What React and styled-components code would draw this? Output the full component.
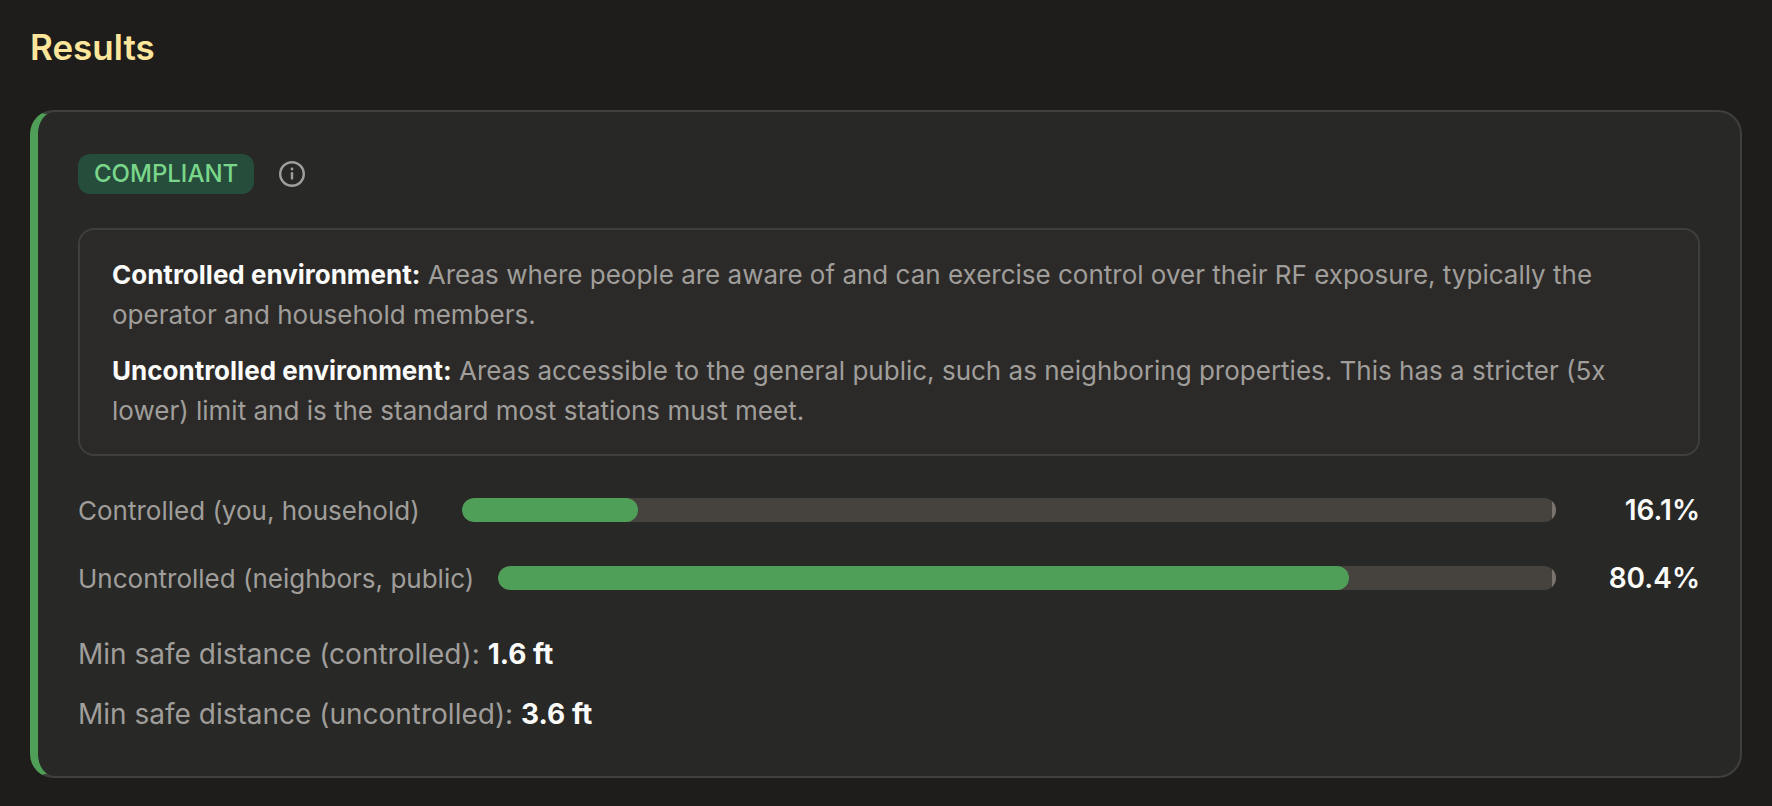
import React from "react";
import styled, { createGlobalStyle } from "styled-components";

const GlobalStyle = createGlobalStyle`
  * {
    box-sizing: border-box;
  }

  body {
    margin: 0;
    background: #1f1d1b;
    color: #a09e9b;
    font-family: Inter, "Liberation Sans", sans-serif;
    font-size: 28px;
    line-height: 44px;
    font-optical-sizing: none;
    -webkit-font-smoothing: antialiased;
  }
`

const Page = styled.main`
  padding: 24px 30px 28px;
`

const Title = styled.h2`
  margin: 0 0 40px;
  color: #fbe69b;
  font-size: 35px;
  font-weight: 600;
  line-height: 46px;
`

const Card = styled.section`
  padding: 40px;
  background: #282826;
  border: 2px solid #3f3f3d;
  border-left: 8px solid #4f9f58;
  border-radius: 24px;
`

const StatusRow = styled.div`
  display: flex;
  align-items: center;
  gap: 16px;
  height: 44px;
  margin-bottom: 32px;
`

const Badge = styled.span`
  padding: 0 16px;
  border-radius: 12px;
  background: #264d3c;
  color: #7ad68a;
  font-size: 24px;
  font-weight: 500;
  line-height: 40px;
`

const InfoButton = styled.button`
  display: flex;
  padding: 8px;
  border: 0;
  background: none;
  color: #a09e9b;
  cursor: pointer;
`

const InfoBox = styled.div`
  display: flex;
  flex-direction: column;
  gap: 16px;
  margin-bottom: 32px;
  padding: 25px 32px 23px;
  background: #2c2a28;
  border: 2px solid #3f3f3d;
  border-radius: 16px;
  font-size: 26px;
  line-height: 40px;
`

const InfoText = styled.p`
  margin: 0;
`

const Strong = styled.strong`
  color: #fafaf9;
  font-weight: 700;
`

const Rows = styled.div`
  display: flex;
  flex-direction: column;
  gap: ${props => props.$gap}px;
  margin-bottom: ${props => props.$bottom || 0}px;
`

const ExposureRow = styled.div`
  display: flex;
  align-items: center;
  gap: 24px;
`

const Label = styled.span`
  min-width: 360px;
  padding-top: 2px;
  font-size: 26px;
  line-height: 42px;
  white-space: nowrap;
`

const Track = styled.div`
  position: relative;
  flex: 1;
  height: 24px;
  overflow: hidden;
  border-radius: 12px;
  background: #46423d;
`

const Fill = styled.div`
  height: 100%;
  border-radius: 12px;
  background: #4f9f58;
`

/* marks the 100% limit on top of the track */
const LimitMark = styled.span`
  position: absolute;
  top: 0;
  right: 0;
  width: 4px;
  height: 100%;
  background: #78716c;
`

const Value = styled.span`
  width: 120px;
  color: #fafaf9;
  font-weight: 600;
  text-align: right;
`

const Distance = styled.p`
  margin: 0;
`

const exposures = [
  { id: "controlled", label: "Controlled (you, household)", percent: 16.1 },
  { id: "uncontrolled", label: "Uncontrolled (neighbors, public)", percent: 80.4 },
];

const distances = [
  { id: "controlled", label: "Min safe distance (controlled):", value: "1.6 ft" },
  { id: "uncontrolled", label: "Min safe distance (uncontrolled):", value: "3.6 ft" },
];

function InfoIcon() {
  return (
    <svg width="28" height="28" viewBox="0 0 28 28" fill="none" stroke="currentColor" strokeWidth="2.4" strokeLinecap="round" aria-hidden="true">
      <circle cx="14" cy="14" r="11.8" />
      <path d="M14 13.2v5.2" />
      <path d="M14 8.9v0.1" strokeWidth="2.8" />
    </svg>
  );
}

function Exposure({ label, percent }) {
  return (
    <ExposureRow>
      <Label>{label}</Label>
      <Track role="progressbar" aria-label={label} aria-valuenow={percent} aria-valuemin={0} aria-valuemax={100}>
        <Fill style={{ width: `${percent}%` }} />
        <LimitMark />
      </Track>
      <Value>{percent}%</Value>
    </ExposureRow>
  );
}

function App() {
  return (
    <Page>
      <GlobalStyle />
      <Title>Results</Title>
      <Card>
        <StatusRow>
          <Badge>COMPLIANT</Badge>
          <InfoButton type="button" aria-label="About environments">
            <InfoIcon />
          </InfoButton>
        </StatusRow>
        <InfoBox>
          <InfoText>
            <Strong>Controlled environment:</Strong> Areas where people are aware of and can exercise
            control over their RF exposure, typically the operator and household members.
          </InfoText>
          <InfoText>
            <Strong>Uncontrolled environment:</Strong> Areas accessible to the general public, such as
            neighboring properties. This has a stricter (5x lower) limit and is the standard most
            stations must meet.
          </InfoText>
        </InfoBox>
        <Rows $gap={24} $bottom={32}>
          {exposures.map(item => (
            <Exposure key={item.id} label={item.label} percent={item.percent} />
          ))}
        </Rows>
        <Rows $gap={16}>
          {distances.map(item => (
            <Distance key={item.id}>
              {item.label} <Strong>{item.value}</Strong>
            </Distance>
          ))}
        </Rows>
      </Card>
    </Page>
  );
}

export default App;
